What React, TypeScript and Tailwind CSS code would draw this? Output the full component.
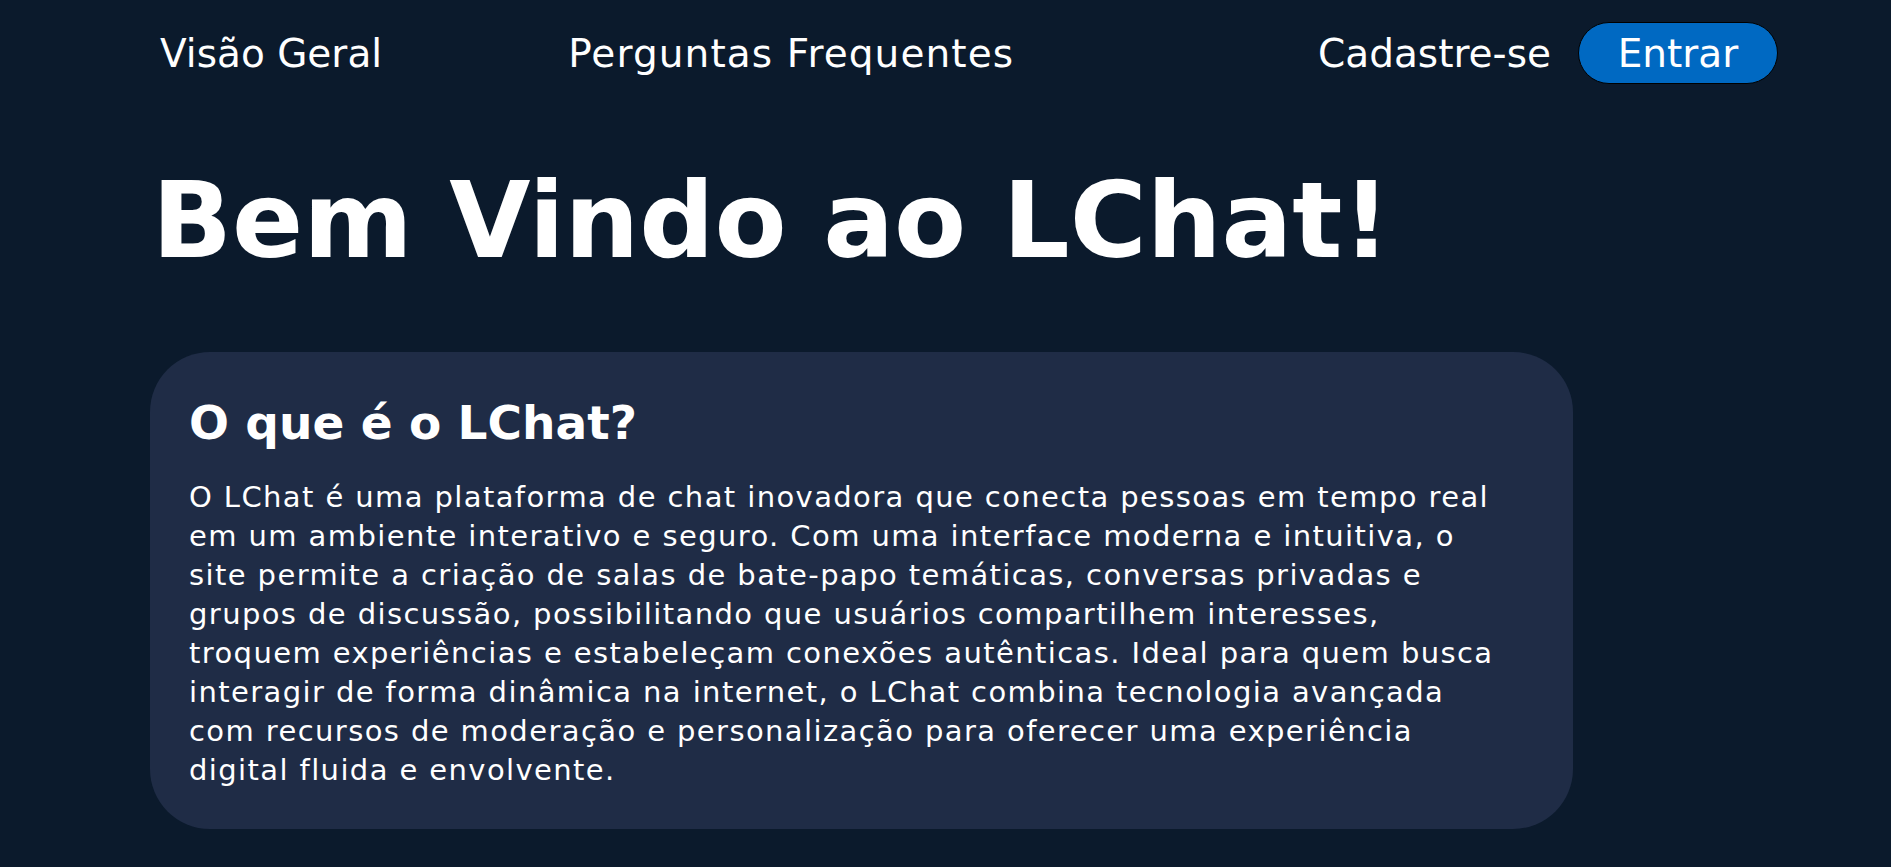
export default function App() {
  return (
    <div className="min-h-screen w-full bg-[#0b1a2c] text-white font-['DejaVu_Sans',sans-serif]">
      {/* NAV */}
      <nav className="flex items-center pt-[22px] pl-[160px] pr-[113px]">
        <div className="flex items-center gap-[186px] text-[39px]">
          <a href="#" className="leading-none">Visão Geral</a>
          <a href="#" className="leading-none tracking-[1.1px]">Perguntas Frequentes</a>
        </div>
        <div className="ml-auto flex items-center gap-[27px]">
          <a href="#" className="text-[39px] leading-none">Cadastre-se</a>
          <button className="h-[62px] w-[200px] rounded-full border border-black bg-[#0069c2] text-[39px] leading-none text-white">
            Entrar
          </button>
        </div>
      </nav>

      <main className="pl-[150px]">
        <h1 className="mt-[85px] pl-[2px] text-[105px] font-bold leading-none">Bem Vindo ao LChat!</h1>

        <section className="mt-[78px] w-[1423px] rounded-[60px] bg-[#1f2c46] px-[39px] pt-[43px] pb-[39px]">
          <h2 className="text-[47px] font-bold leading-[1.2]">O que é o LChat?</h2>
          <p className="mt-[27px] text-[29px] leading-[39px] tracking-[1.4px] whitespace-nowrap">
            O LChat é uma plataforma de chat inovadora que conecta pessoas em tempo real<br />
            em um ambiente interativo e seguro. Com uma interface moderna e intuitiva, o<br />
            site permite a criação de salas de bate-papo temáticas, conversas privadas e<br />
            grupos de discussão, possibilitando que usuários compartilhem interesses,<br />
            troquem experiências e estabeleçam conexões autênticas. Ideal para quem busca<br />
            interagir de forma dinâmica na internet, o LChat combina tecnologia avançada<br />
            com recursos de moderação e personalização para oferecer uma experiência<br />
            digital fluida e envolvente.
          </p>
        </section>
      </main>
    </div>
  );
}
